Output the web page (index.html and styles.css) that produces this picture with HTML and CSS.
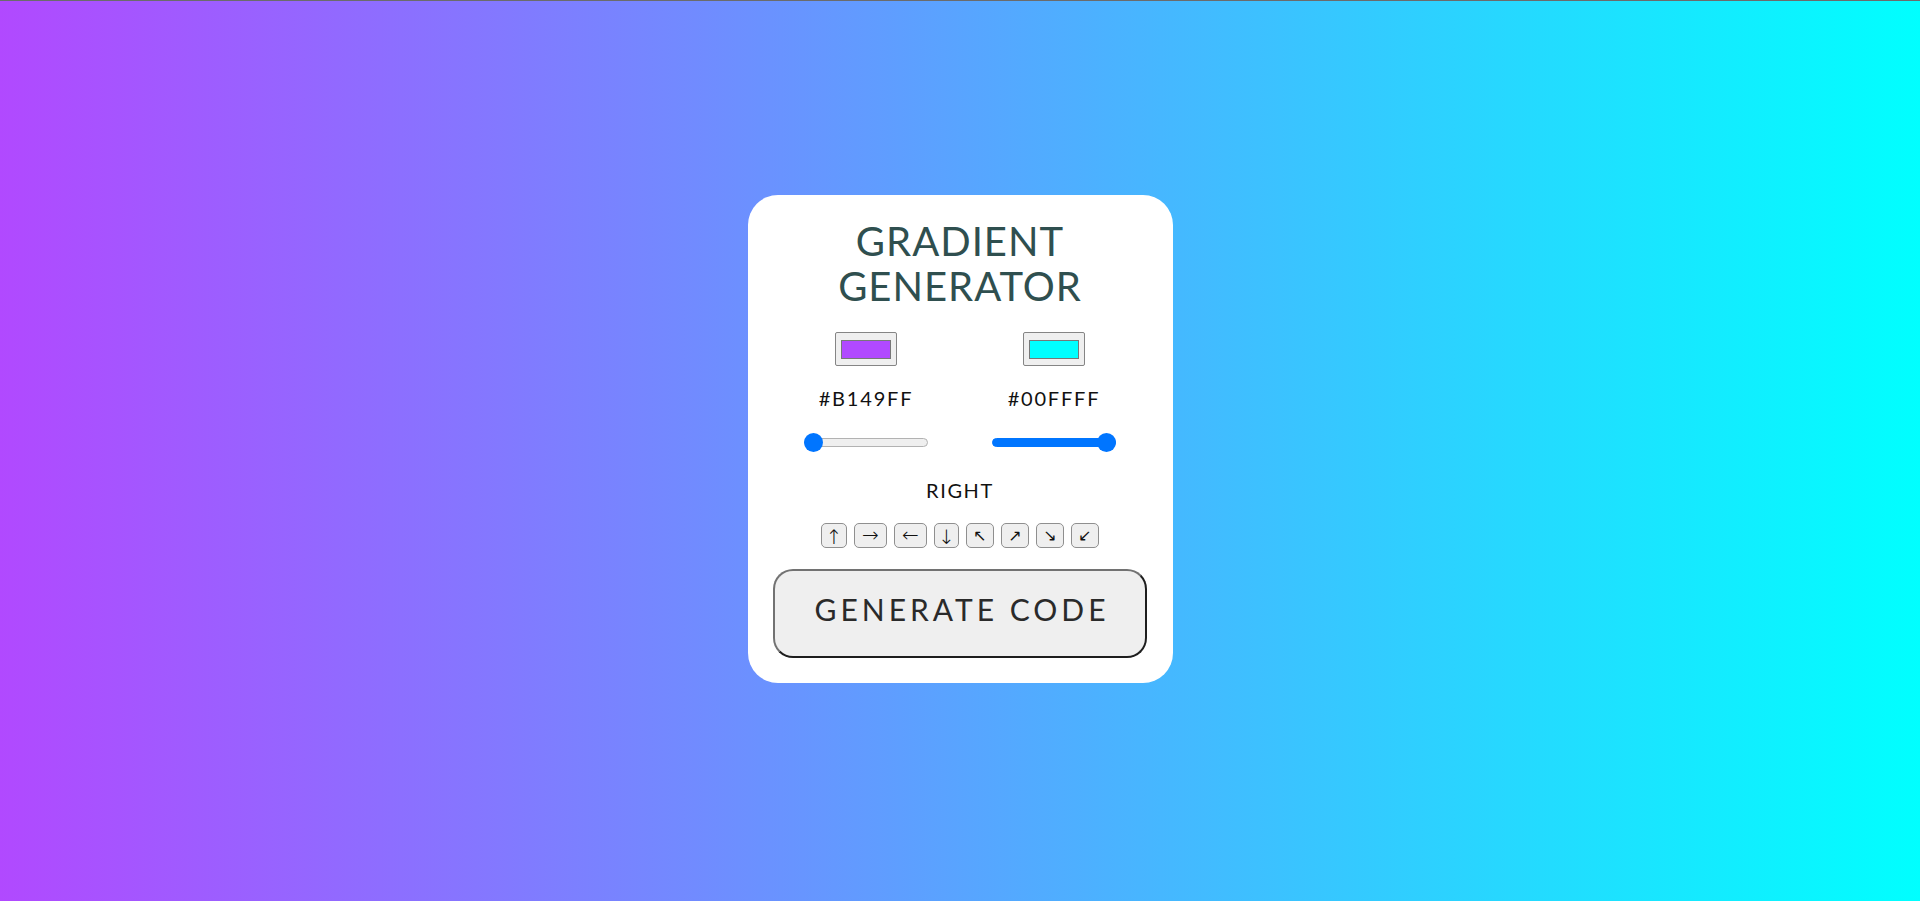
FILE: index.html
```html
<!DOCTYPE html>
<html lang="en">
<head>
<meta charset="utf-8">
<title>Gradient Generator</title>
<link rel="stylesheet" href="styles.css">
</head>
<body>
<main class="card">
  <h1 class="title">GRADIENT<br>GENERATOR</h1>
  <div class="pickers">
    <div class="picker">
      <div class="swatch"><span class="swatch-color purple"></span></div>
      <div class="hex">#B149FF</div>
      <div class="slider"><span class="thumb start"></span></div>
    </div>
    <div class="picker">
      <div class="swatch"><span class="swatch-color cyan"></span></div>
      <div class="hex">#00FFFF</div>
      <div class="slider filled"><span class="thumb end"></span></div>
    </div>
  </div>
  <div class="direction">RIGHT</div>
  <div class="arrows">
    <button class="arrow straight vert w26">↑</button>
    <button class="arrow straight w33">→</button>
    <button class="arrow straight w33">←</button>
    <button class="arrow straight vert w25">↓</button>
    <button class="arrow diag w28">↖</button>
    <button class="arrow diag w28">↗</button>
    <button class="arrow diag w28">↘</button>
    <button class="arrow diag w28">↙</button>
  </div>
  <button class="generate">GENERATE CODE</button>
</main>
</body>
</html>
```
FILE: styles.css
```css
html, body {
  margin: 0;
  padding: 0;
}
body {
  box-sizing: border-box;
  min-height: 901px;
  border-top: 1px solid #6b6b6b;
  background: linear-gradient(to right, #b149ff, #00ffff);
  font-family: Lato, "Open Sans", sans-serif;
  display: flex;
  flex-direction: column;
  align-items: center;
  padding-top: 194px;
}
.card {
  width: 425px;
  box-sizing: border-box;
  background: #fff;
  border-radius: 30px;
  padding: 24px 0 25px;
  display: flex;
  flex-direction: column;
  align-items: center;
}
.title {
  margin: 0;
  font-size: 40px;
  line-height: 45px;
  font-weight: 400;
  letter-spacing: 1px;
  color: #2f4f4f;
  text-align: center;
}
.pickers {
  width: 376px;
  display: grid;
  grid-template-columns: 188px 188px;
  margin-top: 23px;
}
.picker {
  display: flex;
  flex-direction: column;
  align-items: center;
}
.swatch {
  width: 62px;
  height: 34px;
  box-sizing: border-box;
  border: 1px solid #858585;
  border-radius: 2px;
  background: #efefef;
  display: flex;
  align-items: center;
  justify-content: center;
}
.swatch-color {
  width: 50px;
  height: 19px;
  box-sizing: border-box;
  border: 1px solid #777;
}
.purple { background: #b149ff; }
.cyan { background: #00ffff; }
.hex {
  margin-top: 20px;
  font-size: 20px;
  line-height: 24px;
  letter-spacing: 1.8px;
  color: #111;
}
.slider {
  position: relative;
  margin-top: 28px;
  width: 124px;
  height: 9px;
  box-sizing: border-box;
  border: 1px solid #b2b2b2;
  border-radius: 5px;
  background: #efefef;
  margin-bottom: 5px;
}
.slider.filled {
  border-color: #0075ff;
  background: #0075ff;
}
.thumb {
  position: absolute;
  top: -6px;
  width: 19px;
  height: 19px;
  border-radius: 50%;
  background: #0075ff;
}
.thumb.start { left: -1px; }
.thumb.end { right: -1px; }
.direction {
  margin-top: 26px;
  font-size: 20px;
  line-height: 24px;
  letter-spacing: 1.6px;
  color: #111;
}
.arrows {
  margin-top: 21px;
  display: flex;
  gap: 7px;
}
.arrow {
  height: 25px;
  padding: 0;
  box-sizing: border-box;
  border: 1px solid #8f8f8f;
  border-radius: 5px;
  background: #efefef;
  color: #111;
  font-family: "DejaVu Sans", sans-serif;
  line-height: 23px;
  overflow: visible;
}
.straight { font-size: 20px; font-weight: 200; }
.vert { padding-top: 2px; }
.diag { font-size: 16px; font-weight: 400; }
.w25 { width: 25px; }
.w26 { width: 26px; }
.w28 { width: 28px; }
.w33 { width: 33px; }
.generate {
  margin-top: 21px;
  width: 374px;
  height: 89px;
  box-sizing: border-box;
  border: 2px solid;
  border-color: #727272 #1e1e1e #1e1e1e #727272;
  border-radius: 20px;
  background: #efefef;
  color: #2a2a2a;
  font-family: Lato, "Open Sans", sans-serif;
  font-size: 30px;
  letter-spacing: 4px;
  padding: 0 0 9px 4px;
}
```
